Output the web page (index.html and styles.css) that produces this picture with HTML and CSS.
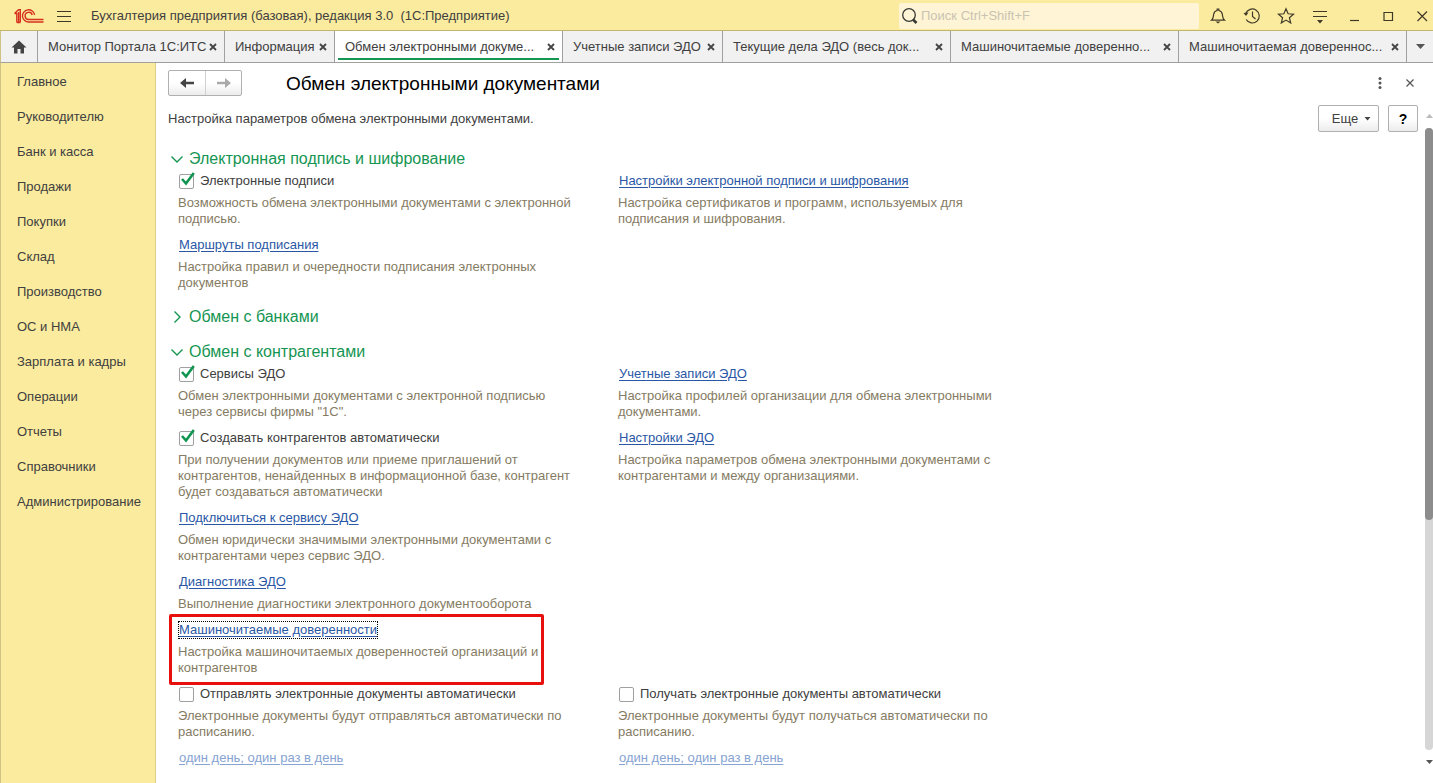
FILE: index.html
```html
<!DOCTYPE html>
<html lang="ru">
<head>
<meta charset="utf-8">
<title>Обмен электронными документами</title>
<link rel="stylesheet" href="styles.css">
</head>
<body>
<div class="app">
  <header class="titlebar">
    <svg class="logo" width="30" height="16" viewBox="0 0 30 16" aria-label="1С" role="img">
      <g fill="none" stroke="#d5301f" stroke-width="1.4">
        <path d="M0.500 5.500H2.800V14.500M0.500 5.500L4.500 1.700H6.300V14.500M2.800 14.500H6.300M4.600 4V14"/>
        <path d="M20.600 7A6.100 6.100 0 1 0 15 14H29.500"/>
        <path d="M18.200 7A3.600 3.600 0 1 0 15 11.500H29.500"/>
      </g>
    </svg>
    <button class="icon-btn menu-btn" aria-label="Меню">
      <svg width="16" height="12" viewBox="0 0 16 12" fill="none" stroke="#3f3a28" stroke-width="1.2"><path d="M1 1.500H15M1 6.500H15M1 11.500H15"/></svg>
    </button>
    <span class="app-name">Бухгалтерия предприятия (базовая), редакция 3.0&nbsp; (1С:Предприятие)</span>
    <label class="search">
      <svg width="18" height="18" viewBox="0 0 18 18" fill="none" stroke="#3a3a34"><circle cx="8" cy="8" r="6.300" stroke-width="1.300"/><path d="M12 12.500L15.500 16" stroke-width="2.600"/></svg>
      <input class="search-input" type="text" placeholder="Поиск Ctrl+Shift+F" aria-label="Поиск">
    </label>
    <div class="tools">
      <button class="icon-btn" aria-label="Уведомления">
        <svg width="18" height="18" viewBox="0 0 18 18" fill="none" stroke="#3f3a28" stroke-width="1.2"><path d="M2.500 13.200C4.600 11.400 4.200 9.500 4.700 7.200C5.100 5.200 6.700 3.800 8.200 3.500V2H9.800V3.500C11.300 3.800 12.900 5.200 13.300 7.200C13.800 9.500 13.400 11.400 15.500 13.200Z"/><path d="M6.500 14.500H11.500L9 16.500Z" fill="#3f3a28" stroke="none"/></svg>
      </button>
      <button class="icon-btn" aria-label="История">
        <svg width="18" height="18" viewBox="0 0 18 18" fill="none" stroke="#3f3a28" stroke-width="1.2"><path d="M2.700 6.500A7 7 0 1 1 3.200 12.500"/><path d="M9.500 4.500V9.500L12.500 12"/><path d="M0.500 6L5.500 5.500L3 9Z" fill="#3f3a28" stroke="none"/></svg>
      </button>
      <button class="icon-btn" aria-label="Избранное">
        <svg width="18" height="18" viewBox="0 0 18 18" fill="none" stroke="#3f3a28" stroke-width="1.2"><path d="M9 1.800L11.100 6.800L16.500 7.200L12.400 10.700L13.700 16L9 13.100L4.300 16L5.600 10.700L1.500 7.200L6.900 6.800Z"/></svg>
      </button>
      <button class="icon-btn" aria-label="Настройка панели">
        <svg width="18" height="18" viewBox="0 0 18 18" fill="none" stroke="#3f3a28" stroke-width="1.2"><path d="M2 4.500H16M2 9.500H16"/><path d="M6 13H12L9 16.500Z" fill="#3f3a28" stroke="none"/></svg>
      </button>
      <button class="icon-btn" aria-label="Свернуть">
        <svg width="18" height="18" viewBox="0 0 18 18" fill="none" stroke="#3f3a28" stroke-width="1.200"><path d="M5 13.500H14"/></svg>
      </button>
      <button class="icon-btn" aria-label="Развернуть">
        <svg width="18" height="18" viewBox="0 0 18 18" fill="none" stroke="#3f3a28" stroke-width="1.200"><path d="M5 5.500H13.500V13.500H5Z"/></svg>
      </button>
      <button class="icon-btn" aria-label="Закрыть программу">
        <svg width="18" height="18" viewBox="0 0 18 18" fill="none" stroke="#3f3a28" stroke-width="1.200"><path d="M4.500 4.500L14 14M14 4.500L4.500 14"/></svg>
      </button>
    </div>
  </header>

  <nav class="tabs" aria-label="Открытые окна">
    <a class="home" href="#" aria-label="Начальная страница">
      <svg width="16" height="14" viewBox="0 0 16 14" fill="#444"><path d="M8 0.500L15.500 7.500H13V13.500H9.500V9H6.500V13.500H3V7.500H0.500Z"/></svg>
    </a>
    <div class="tab tab-m"><a href="#">Монитор Портала 1С:ИТС</a><button class="tab-close" aria-label="Закрыть"><svg width="8" height="8" viewBox="0 0 8 8"><path d="M1 1L7 7M7 1L1 7"/></svg></button></div>
    <div class="tab tab-xs"><a href="#">Информация</a><button class="tab-close" aria-label="Закрыть"><svg width="8" height="8" viewBox="0 0 8 8"><path d="M1 1L7 7M7 1L1 7"/></svg></button></div>
    <div class="tab tab-l active"><a href="#" aria-current="page">Обмен электронными докуме...</a><button class="tab-close" aria-label="Закрыть"><svg width="8" height="8" viewBox="0 0 8 8"><path d="M1 1L7 7M7 1L1 7"/></svg></button></div>
    <div class="tab tab-s"><a href="#">Учетные записи ЭДО</a><button class="tab-close" aria-label="Закрыть"><svg width="8" height="8" viewBox="0 0 8 8"><path d="M1 1L7 7M7 1L1 7"/></svg></button></div>
    <div class="tab tab-l"><a href="#">Текущие дела ЭДО (весь док...</a><button class="tab-close" aria-label="Закрыть"><svg width="8" height="8" viewBox="0 0 8 8"><path d="M1 1L7 7M7 1L1 7"/></svg></button></div>
    <div class="tab tab-l"><a href="#">Машиночитаемые доверенно...</a><button class="tab-close" aria-label="Закрыть"><svg width="8" height="8" viewBox="0 0 8 8"><path d="M1 1L7 7M7 1L1 7"/></svg></button></div>
    <div class="tab tab-l"><a href="#">Машиночитаемая довереннос...</a><button class="tab-close" aria-label="Закрыть"><svg width="8" height="8" viewBox="0 0 8 8"><path d="M1 1L7 7M7 1L1 7"/></svg></button></div>
    <button class="tab-more" aria-label="Все окна"><svg width="9" height="5" viewBox="0 0 9 5" fill="#555"><path d="M0 0H9L4.500 5Z"/></svg></button>
  </nav>

  <div class="body">
    <nav class="sidebar" aria-label="Разделы">
      <a href="#">Главное</a>
      <a href="#">Руководителю</a>
      <a href="#">Банк и касса</a>
      <a href="#">Продажи</a>
      <a href="#">Покупки</a>
      <a href="#">Склад</a>
      <a href="#">Производство</a>
      <a href="#">ОС и НМА</a>
      <a href="#">Зарплата и кадры</a>
      <a href="#">Операции</a>
      <a href="#">Отчеты</a>
      <a href="#">Справочники</a>
      <a href="#">Администрирование</a>
    </nav>

    <main class="page">
      <div class="page-head">
        <div class="history">
          <button class="nav-btn" aria-label="Назад"><svg width="14" height="12" viewBox="0 0 14 12"><path d="M0 6L6 1V4.800H14V7.200H6V11Z" fill="#444"/></svg></button>
          <button class="nav-btn" aria-label="Вперед"><svg width="14" height="12" viewBox="0 0 14 12"><path d="M14 6L8 1V4.800H0V7.200H8V11Z" fill="#aaa"/></svg></button>
        </div>
        <h1>Обмен электронными документами</h1>
        <div class="page-actions">
          <button class="icon-btn" aria-label="Действия"><svg width="18" height="18" viewBox="0 0 18 18" fill="#555"><circle cx="9" cy="4.500" r="1.500"/><circle cx="9" cy="9" r="1.500"/><circle cx="9" cy="13.500" r="1.500"/></svg></button>
          <button class="icon-btn" aria-label="Закрыть"><svg width="18" height="18" viewBox="0 0 18 18" fill="none" stroke="#555" stroke-width="1.200"><path d="M5.500 5.500L12.500 12.500M12.500 5.500L5.500 12.500"/></svg></button>
        </div>
      </div>

      <div class="toolbar">
        <p>Настройка параметров обмена электронными документами.</p>
        <button class="btn btn-more">Еще <svg width="7" height="4" viewBox="0 0 7 4" fill="#444"><path d="M0.500 0H6.500L3.500 3.500Z"/></svg></button>
        <button class="btn btn-help">?</button>
      </div>

      <div class="scroll-area">
        <div class="content">
          <section>
            <h2><svg width="14" height="14" viewBox="0 0 14 14"><path d="M1.500 4.500L7 10L12.500 4.500"/></svg>Электронная подпись и шифрование</h2>
            <div class="grid">
              <div class="item">
                <label class="check"><input type="checkbox" checked><svg class="tick" width="16" height="16" viewBox="0 0 16 16"><path d="M3 7L7 11.500L14.800 1"/></svg>Электронные подписи</label>
                <p>Возможность обмена электронными документами с электронной подписью.</p>
              </div>
              <div class="item">
                <a class="link" href="#">Настройки электронной подписи и шифрования</a>
                <p>Настройка сертификатов и программ, используемых для подписания и шифрования.</p>
              </div>
              <div class="item left">
                <a class="link" href="#">Маршруты подписания</a>
                <p>Настройка правил и очередности подписания электронных документов</p>
              </div>
            </div>
          </section>

          <section>
            <h2><svg width="14" height="14" viewBox="0 0 14 14"><path d="M4.500 1.500L10 7L4.500 12.500"/></svg>Обмен с банками</h2>
          </section>

          <section>
            <h2><svg width="14" height="14" viewBox="0 0 14 14"><path d="M1.500 4.500L7 10L12.500 4.500"/></svg>Обмен с контрагентами</h2>
            <div class="grid">
              <div class="item">
                <label class="check"><input type="checkbox" checked><svg class="tick" width="16" height="16" viewBox="0 0 16 16"><path d="M3 7L7 11.500L14.800 1"/></svg>Сервисы ЭДО</label>
                <p>Обмен электронными документами с электронной подписью через сервисы фирмы "1С".</p>
              </div>
              <div class="item">
                <a class="link" href="#">Учетные записи ЭДО</a>
                <p>Настройка профилей организации для обмена электронными документами.</p>
              </div>
              <div class="item">
                <label class="check"><input type="checkbox" checked><svg class="tick" width="16" height="16" viewBox="0 0 16 16"><path d="M3 7L7 11.500L14.800 1"/></svg>Создавать контрагентов автоматически</label>
                <p>При получении документов или приеме приглашений от контрагентов, ненайденных в информационной базе, контрагент будет создаваться автоматически</p>
              </div>
              <div class="item">
                <a class="link" href="#">Настройки ЭДО</a>
                <p>Настройка параметров обмена электронными документами с контрагентами и между организациями.</p>
              </div>
              <div class="item left">
                <a class="link" href="#">Подключиться к сервису ЭДО</a>
                <p>Обмен юридически значимыми электронными документами с контрагентами через сервис ЭДО.</p>
              </div>
              <div class="item left">
                <a class="link" href="#">Диагностика ЭДО</a>
                <p>Выполнение диагностики электронного документооборота</p>
              </div>
              <div class="item left marked">
                <a class="link focused" href="#">Машиночитаемые доверенности</a>
                <p>Настройка машиночитаемых доверенностей организаций и контрагентов</p>
              </div>
              <div class="item left">
                <label class="check"><input type="checkbox">Отправлять электронные документы автоматически</label>
                <p>Электронные документы будут отправляться автоматически по расписанию.</p>
                <a class="link muted" href="#">один день; один раз в день</a>
              </div>
              <div class="item">
                <label class="check"><input type="checkbox">Получать электронные документы автоматически</label>
                <p>Электронные документы будут получаться автоматически по расписанию.</p>
                <a class="link muted" href="#">один день; один раз в день</a>
              </div>
            </div>
          </section>
        </div>
      </div>
      <div class="scrollbar" aria-hidden="true">
        <svg width="7" height="4" viewBox="0 0 7 4" fill="#bbb"><path d="M3.500 0L7 4H0Z"/></svg>
        <div class="track"><div class="thumb"></div></div>
        <svg width="7" height="4" viewBox="0 0 7 4" fill="#555"><path d="M0 0H7L3.500 4Z"/></svg>
      </div>
    </main>
  </div>
</div>
</body>
</html>
```
FILE: styles.css
```css
* { box-sizing: border-box; }
body {
  margin: 0;
  font: 13px/16px "Liberation Sans", Arial, sans-serif;
  color: #404040;
  background: #fff;
}
h1, h2, p { margin: 0; font-weight: normal; }
a { color: inherit; text-decoration: none; }
button { font: inherit; color: inherit; padding: 0; cursor: pointer; }
svg { flex: none; }

.app { display: flex; flex-direction: column; height: 100vh; overflow: hidden; }

.icon-btn {
  display: flex; align-items: center; justify-content: center;
  width: 18px; height: 18px;
  border: 0; background: none;
}

/* Title bar */
.titlebar {
  display: flex; align-items: center; flex: none;
  height: 31px; padding: 1px 2px 0 14px;
  background: #fbeb9e; border-bottom: 1px solid #c3b66c;
}
.menu-btn { margin: 0 18px 0 11px; }
.app-name { flex: 1; white-space: nowrap; }
.search {
  display: flex; align-items: center; gap: 2px;
  width: 300px; height: 26px; padding-left: 2px;
  background: #fff5d6; border-radius: 2px;
}
.search-input {
  flex: 1; min-width: 0; padding: 0;
  border: 0; outline: 0; background: none; font: inherit;
}
.search-input::placeholder { color: #c9c3b2; opacity: 1; }
.tools { display: flex; gap: 16px; margin-left: 10px; }

/* Window tabs */
.tabs {
  display: flex; flex: none;
  height: 32px;
  background: #f1f1f1; border-bottom: 1px solid #a0a0a0; border-left: 1px solid #cfc283;
}
.home {
  display: flex; align-items: center; justify-content: center;
  width: 37px; border-right: 1px solid #a0a0a0;
}
.tab {
  display: flex; align-items: center; justify-content: space-between;
  padding: 0 5px 0 10px;
  border-right: 1px solid #a0a0a0;
  white-space: nowrap;
}
.tab-xs { width: 110px; }
.tab-s { width: 160px; }
.tab-m { width: 187px; }
.tab-l { width: 228px; }
.tab.active {
  background: linear-gradient(#159552, #159552) center bottom 2px / calc(100% - 6px) 2px no-repeat #fff;
}
.tab-close {
  display: flex; align-items: center; justify-content: center;
  width: 12px; height: 16px; border: 0; background: none;
}
.tab-close path { stroke: #444; stroke-width: 1.8; }
.tab-more {
  display: flex; align-items: center; justify-content: center;
  flex: 1; border: 0; background: none;
}

/* Layout */
.body { display: flex; flex: 1; min-height: 0; }
.sidebar {
  display: flex; flex-direction: column; flex: none;
  width: 156px; padding: 1px 0 0 16px;
  background: #fbeb9e; border-right: 1px solid #dccf8a; border-left: 1px solid #cfc283;
}
.sidebar a { line-height: 35px; }
.page {
  display: grid; flex: 1; min-width: 0;
  grid-template: auto auto 1fr / 1fr 8px;
  padding-top: 7px;
}

/* Page header */
.page-head {
  display: flex; align-items: center; grid-column: 1 / -1;
  height: 26px; padding: 0 14px 0 12px;
}
.history {
  display: flex; height: 26px;
  border: 1px solid #b0b0b0; border-radius: 2px;
  background: linear-gradient(#fff 50%, #ececec);
}
.nav-btn {
  display: flex; align-items: center; justify-content: center;
  width: 36px; border: 0; background: none;
}
.nav-btn + .nav-btn { border-left: 1px solid #d0d0d0; }
h1 { flex: 1; margin-left: 44px; padding-top: 2px; font-size: 19px; line-height: 24px; color: #000; }
.page-actions { display: flex; gap: 12px; }

.toolbar {
  display: flex; align-items: center; gap: 9px; grid-column: 1 / 2;
  height: 27px; margin-top: 9px; padding: 0 7px 0 12px;
}
.toolbar p { flex: 1; padding-top: 1px; }
.btn {
  display: flex; align-items: center; justify-content: center; gap: 6px;
  height: 27px;
  border: 1px solid #b0b0b0; border-radius: 2px;
  background: linear-gradient(#fff 50%, #ececec);
}
.btn-more { width: 61px; padding-left: 6px; }
.btn-help { width: 30px; font-size: 14px; font-weight: bold; color: #000; }

/* Settings */
.scroll-area { grid-column: 1; min-height: 0; overflow: hidden; padding: 17px 0 0 14px; }
section { margin-bottom: 15px; }
.grid + * { margin-top: 1px; }
h2 {
  display: flex; align-items: center; gap: 5px;
  font-size: 16px; line-height: 20px; color: #159552;
}
h2 path { fill: none; stroke: #159552; stroke-width: 1.4; }
.grid {
  display: grid; grid-template-columns: 440px 440px; row-gap: 10px;
  padding: 4px 0 1px 8px;
}
.item { display: flex; flex-direction: column; align-items: flex-start; gap: 6px; }
.item.left { grid-column: 1; }
.item p { max-width: 400px; color: #857b63; }
.link { margin-left: 1px; color: #2a57a5; text-decoration: underline; text-underline-offset: 2px; }
.link.muted { margin-top: 4px; color: #86a3d2; }
.link.focused { outline: 1px dotted #000; }
.marked { position: relative; }
.marked::after {
  content: ""; position: absolute; inset: -8px 74px -9px -9px;
  border: 3px solid #e8100c; border-radius: 2px;
}

.check { display: flex; align-items: center; gap: 6px; position: relative; height: 16px; margin-left: 1px; }
.check input {
  appearance: none; width: 15px; height: 15px; margin: 0;
  border: 1px solid #a0a0a0; border-radius: 2px; background: #fff;
}
.tick { position: absolute; left: 0; top: -1px; pointer-events: none; }
.tick path { fill: none; stroke: #0f9550; stroke-width: 2.6; }

/* Scrollbar */
.scrollbar {
  display: flex; flex-direction: column; align-items: center; gap: 10px;
  grid-column: 2; grid-row: 2 / 4;
  padding: 18px 0 19px;
}
.track { flex: 1; width: 8px; background: #d6d6d6; border-radius: 4px; }
.thumb { height: 63%; background: #8c8c8c; border-radius: 4px; }
```
